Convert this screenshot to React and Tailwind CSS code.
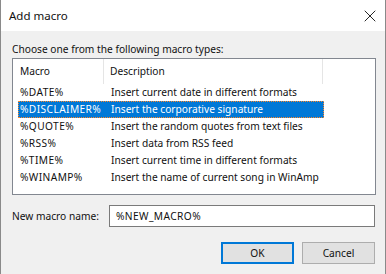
import { X } from "lucide-react";

const macros = [
  { name: "%DATE%", desc: "Insert current date in different formats" },
  { name: "%DISCLAIMER%", desc: "Insert the corporative signature", selected: true },
  { name: "%QUOTE%", desc: "Insert the random quotes from text files" },
  { name: "%RSS%", desc: "Insert data from RSS feed" },
  { name: "%TIME%", desc: "Insert current time in different formats" },
  { name: "%WINAMP%", desc: "Insert the name of current song in WinAmp" },
];

export default function App() {
  return (
    <div className="flex h-[274px] w-[386px] flex-col overflow-hidden border-x border-[#8a8a8a] bg-[#f0f0f0] font-[family-name:'Noto_Sans',sans-serif] text-[10.2px] leading-[15px] text-[#111]">
      {/* Title bar */}
      <div className="flex h-[31px] shrink-0 items-center justify-between bg-white pl-[8px] pr-[5px]">
        <span className="text-[11.5px]">Add macro</span>
        <X className="h-[20px] w-[20px]" strokeWidth={1.1} />
      </div>

      {/* Body */}
      <div className="flex flex-1 flex-col pl-[11px] pr-[9px] pt-[11px]">
        <p className="mb-[1px] h-[15px] whitespace-nowrap">Choose one from the following macro types:</p>

        {/* List */}
        <div className="h-[137px] w-[364px] border border-[#828790] bg-white">
          <div className="flex h-[25px] items-center">
            <div className="flex h-full w-[91px] items-center border-r border-[#e5e5e5] pl-[7px]">Macro</div>
            <div className="flex h-full w-[219px] items-center border-r border-[#e5e5e5] pl-[6px]">Description</div>
          </div>
          {macros.map((m) => (
            <div
              key={m.name}
              className={
                m.selected
                  ? "ml-[5px] flex h-[17px] w-[306px] items-center border border-dotted border-[#ff8728] bg-[#0078d7] text-white"
                  : "ml-[5px] flex h-[17px] w-[306px] items-center border border-transparent"
              }
            >
              <span className="w-[92px] shrink-0 whitespace-nowrap pl-[1px] tracking-[0.4px]">{m.name}</span>
              <span className="whitespace-nowrap">{m.desc}</span>
            </div>
          ))}
        </div>

        {/* Name field */}
        <div className="mt-[10px] flex items-center">
          <span className="w-[97px] shrink-0 whitespace-nowrap">New macro name:</span>
          <div className="flex h-[22px] w-[266px] items-center border border-[#7a7a7a] bg-white pl-[6px] tracking-[0.4px]">
            %NEW_MACRO%
          </div>
        </div>

        {/* Buttons */}
        <div className="mt-[15px] flex justify-end gap-[8px] pr-[1px]">
          <button className="h-[22px] w-[73px] border-2 border-[#0078d7] bg-[#e1e1e1]">OK</button>
          <button className="h-[22px] w-[73px] border border-[#adadad] bg-[#e1e1e1]">Cancel</button>
        </div>
      </div>
    </div>
  );
}
